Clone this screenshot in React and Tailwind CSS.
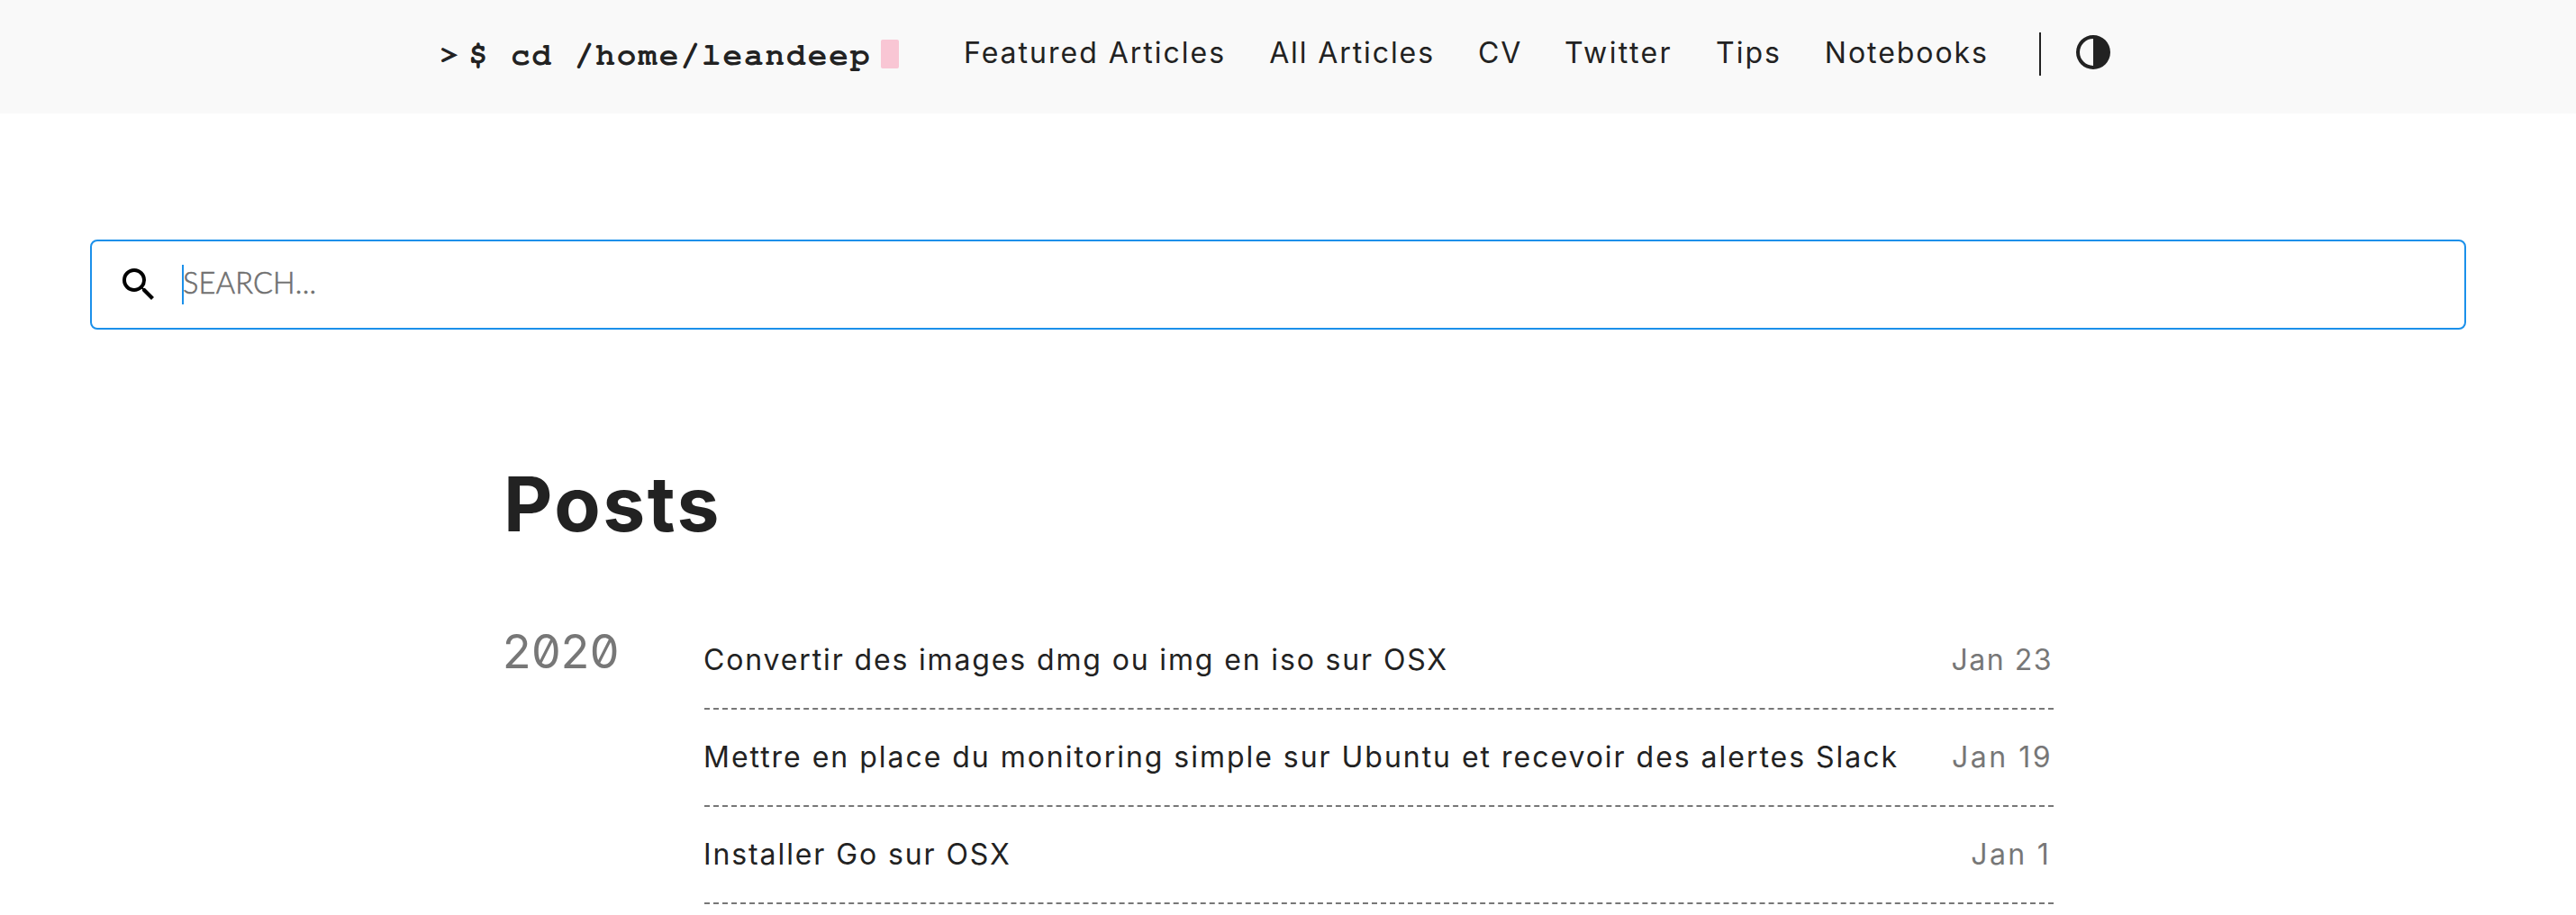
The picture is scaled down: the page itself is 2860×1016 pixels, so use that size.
import React from 'react';

const links = [
  { label: 'Featured Articles', className: 'tracking-[2px]' },
  { label: 'All Articles', className: 'tracking-[1.9px]' },
  { label: 'CV', className: 'tracking-[1.8px]' },
  { label: 'Twitter', className: '-ml-px tracking-[2.4px]' },
  { label: 'Tips', className: 'tracking-[2px]' },
  { label: 'Notebooks', className: 'tracking-[1.95px]' },
];

const posts = [
  { title: 'Convertir des images dmg ou img en iso sur OSX', date: 'Jan 23', titleClass: 'tracking-[1.86px]', dateClass: 'mr-px tracking-[1.5px]' },
  { title: 'Mettre en place du monitoring simple sur Ubuntu et recevoir des alertes Slack', date: 'Jan 19', titleClass: 'tracking-[1.97px]', dateClass: 'mr-px tracking-[2.5px]' },
  { title: 'Installer Go sur OSX', date: 'Jan 1', titleClass: 'tracking-[1.9px]', dateClass: 'mr-[3px] tracking-[2.3px]' },
];

function Header() {
  return (
    <header className="flex h-[126px] items-start bg-[#f9f9f9] pl-[488px]">
      <div className="flex h-[120px] w-[582px] items-center font-['FreeMono','Liberation_Mono',monospace] text-[36px] font-bold">
        <span className="w-[32px]">&gt;</span>
        <span className="pt-0.5 whitespace-pre tracking-[1.94px]">$ cd /home/leandeep</span>
        <span className="ml-[11px] h-8 w-5 rounded-xs bg-[#f9c6d4]" />
      </div>
      <nav className="flex h-[118px] items-center gap-12">
        {links.map((l) => (
          <a key={l.label} href="#" className={l.className}>{l.label}</a>
        ))}
      </nav>
      <span className="mt-9 ml-[56px] h-12 w-0.5 bg-[#222]" />
      <svg className="mt-9 ml-9 size-11" viewBox="0 0 44 44" fill="#222">
        <path fillRule="evenodd" d="M22 41a19 19 0 1 0 0-38a19 19 0 0 0 0 38ZM7 22a15 15 0 0 1 15-15v30A15 15 0 0 1 7 22Z" />
      </svg>
    </header>
  );
}

function SearchBox() {
  return (
    <div className="mt-[140px] ml-[100px] flex h-[100px] w-[2638px] items-center rounded-lg border-2 border-[#1b90ea] pl-7">
      <svg className="size-12" viewBox="0 0 24 24" fill="#000">
        <path d="M15.5 14h-.79l-.28-.27A6.471 6.471 0 0 0 16 9.5 6.5 6.5 0 1 0 9.5 16c1.61 0 3.09-.59 4.23-1.57l.27.28v.79l5 4.99L20.49 19l-4.99-5zm-6 0C7.01 14 5 11.99 5 9.5S7.01 5 9.5 5 14 7.01 14 9.5 11.99 14 9.5 14z" />
      </svg>
      <span className="ml-6 h-11 w-0.5 bg-[#1b90ea]" />
      <span className="-ml-px pb-1 font-[Lato] text-[32.5px] font-light tracking-[0.2px] text-[#707070] [-webkit-text-stroke:0.6px_#707070]">SEARCH...</span>
    </div>
  );
}

export default function App() {
  return (
    <div className="h-[1016px] overflow-hidden bg-white font-[Inter] text-[32px] leading-[48px] text-[#222]">
      <Header />
      <SearchBox />
      <main className="ml-[560px] w-[1720px]">
        <h1 className="mt-[144px] -ml-px text-[84px] leading-[100px] font-bold tracking-[2.5px]">Posts</h1>
        <section className="mt-[70px] flex">
          <h2 className="-ml-[3px] w-[225px] text-[52px] leading-[87px] tracking-[-1.3px] text-[#777] [font-feature-settings:'zero','tnum']">2020</h2>
          <ul className="grow">
            {posts.map((p) => (
              <li key={p.title} className="flex h-[108px] items-center justify-between border-b-2 border-dashed border-[#777]">
                <a href="#" className={`-ml-px ${p.titleClass}`}>{p.title}</a>
                <time className={`text-[#777] ${p.dateClass}`}>{p.date}</time>
              </li>
            ))}
          </ul>
        </section>
      </main>
    </div>
  );
}
